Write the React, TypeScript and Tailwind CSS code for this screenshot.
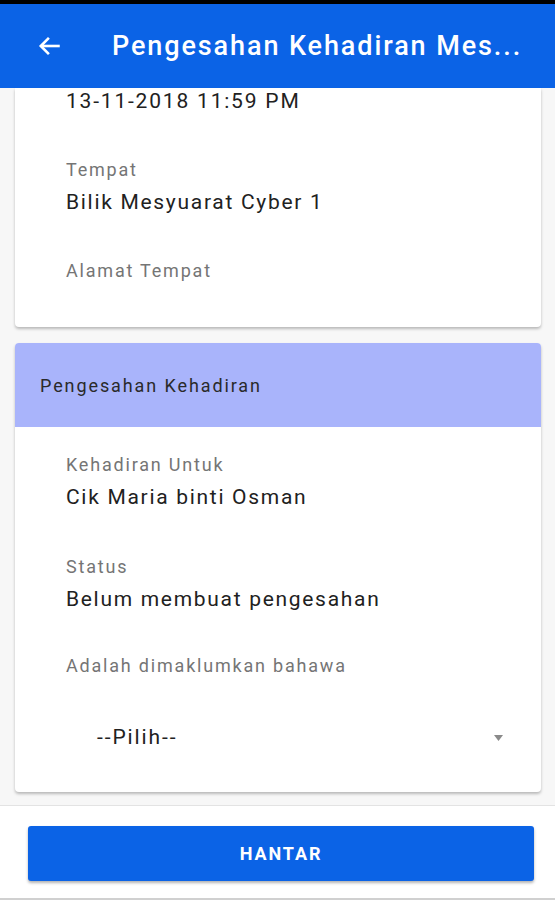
import React from "react";

function Field({ label, value }: { label: string; value?: string }) {
  return (
    <div className="flex flex-col">
      <span className="text-[18px] leading-[22px] tracking-[1.8px] text-[#757575]">{label}</span>
      {value && <span className="mt-[9px] text-[21px] leading-[25px] tracking-[1.7px] text-[#212121]">{value}</span>}
    </div>
  );
}

export default function App() {
  return (
    <div className="flex h-[900px] w-[555px] flex-col overflow-hidden bg-[#f7f7f7] font-['Roboto',sans-serif]">
      <div className="h-[4px] bg-black" />
      <header className="flex h-[84px] items-center bg-[#0b63e6] text-white">
        <svg className="ml-[37px]" width="26" height="26" viewBox="0 0 24 24" fill="none" stroke="white" strokeWidth="2.4">
          <path d="M21 12H4" />
          <path d="M11 4.5 3.5 12 11 19.5" />
        </svg>
        <h1 className="ml-[49px] truncate text-[27px] font-medium tracking-[1.9px]">Pengesahan Kehadiran Mes...</h1>
      </header>

      <main className="flex flex-1 flex-col pl-[15px] pr-[14px]">
        <section className="rounded-b-[4px] bg-white pl-[51px] pb-[45px] shadow-[0_2px_3px_rgba(0,0,0,0.25)]">
          <div className="pt-[1px] text-[21px] leading-[25px] tracking-[1.8px] text-[#212121]">13-11-2018 11:59 PM</div>
          <div className="mt-[45px]">
            <Field label="Tempat" value="Bilik Mesyuarat Cyber 1" />
          </div>
          <div className="mt-[45px]">
            <Field label="Alamat Tempat" />
          </div>
        </section>

        <section className="mt-[16px] overflow-hidden rounded-[4px] bg-white shadow-[0_2px_3px_rgba(0,0,0,0.25)]">
          <div className="flex h-[84px] items-center bg-[#a9b4fb] pl-[25px] text-[18px] tracking-[1.9px] text-[#2a2a2a]">
            Pengesahan Kehadiran
          </div>
          <div className="flex flex-col pl-[51px] pr-[38px] pt-[27px] pb-[42px]">
            <Field label="Kehadiran Untuk" value="Cik Maria binti Osman" />
            <div className="mt-[46px]">
              <Field label="Status" value="Belum membuat pengesahan" />
            </div>
            <div className="mt-[43px]">
              <Field label="Adalah dimaklumkan bahawa" />
            </div>
            <div className="mt-[48px] flex items-center justify-between pl-[31px]">
              <span className="text-[21px] leading-[25px] tracking-[1.9px] text-[#212121]">--Pilih--</span>
              <svg width="9" height="6" viewBox="0 0 9 6">
                <path d="M0 0h9L4.5 6z" fill="#8a8a8a" />
              </svg>
            </div>
          </div>
        </section>
      </main>

      <footer className="flex h-[95px] shrink-0 flex-col border-t border-[#e3e3e3] border-b-2 border-b-[#d0d0d0] bg-white pl-[28px] pr-[21px] pt-[20px]">
        <button className="flex h-[55px] w-full items-center justify-center rounded-[3px] bg-[#0b63e6] text-[18px] font-bold tracking-[1.9px] text-white shadow-[0_2px_3px_rgba(0,0,0,0.3)]">
          HANTAR
        </button>
      </footer>
    </div>
  );
}
